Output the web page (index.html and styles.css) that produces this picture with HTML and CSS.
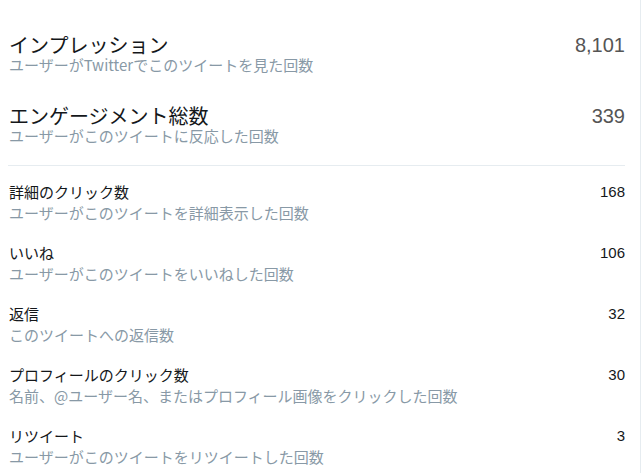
FILE: index.html
```html
<!DOCTYPE html>
<html lang="ja">
<head>
    <meta charset="UTF-8">
    <meta name="viewport" content="width=device-width, initial-scale=1.0">
    <title>ツイートアクティビティ</title>
    <link rel="stylesheet" href="styles.css">
</head>
<body>
    <div class="panel">
        <div class="metric metric-main">
            <div class="metric-text">
                <div class="metric-title">インプレッション</div>
                <div class="metric-desc">ユーザーがTwitterでこのツイートを見た回数</div>
            </div>
            <div class="metric-value">8,101</div>
        </div>
        <div class="metric metric-main">
            <div class="metric-text">
                <div class="metric-title">エンゲージメント総数</div>
                <div class="metric-desc">ユーザーがこのツイートに反応した回数</div>
            </div>
            <div class="metric-value">339</div>
        </div>

        <hr class="divider">

        <div class="metric">
            <div class="metric-text">
                <div class="metric-title">詳細のクリック数</div>
                <div class="metric-desc">ユーザーがこのツイートを詳細表示した回数</div>
            </div>
            <div class="metric-value">168</div>
        </div>
        <div class="metric">
            <div class="metric-text">
                <div class="metric-title">いいね</div>
                <div class="metric-desc">ユーザーがこのツイートをいいねした回数</div>
            </div>
            <div class="metric-value">106</div>
        </div>
        <div class="metric">
            <div class="metric-text">
                <div class="metric-title">返信</div>
                <div class="metric-desc">このツイートへの返信数</div>
            </div>
            <div class="metric-value">32</div>
        </div>
        <div class="metric">
            <div class="metric-text">
                <div class="metric-title">プロフィールのクリック数</div>
                <div class="metric-desc">名前、@ユーザー名、またはプロフィール画像をクリックした回数</div>
            </div>
            <div class="metric-value">30</div>
        </div>
        <div class="metric">
            <div class="metric-text">
                <div class="metric-title">リツイート</div>
                <div class="metric-desc">ユーザーがこのツイートをリツイートした回数</div>
            </div>
            <div class="metric-value">3</div>
        </div>
    </div>
</body>
</html>
```

FILE: styles.css
```css
body {
    margin: 0;
    font-family: "Noto Sans CJK JP", "Liberation Sans", sans-serif;
    color: #14171a;
    background: #fff;
}
.panel {
    width: 641px;
    height: 473px;
    overflow: hidden;
    padding: 34px 15px 0 9px;
    border-right: 1px solid #e6ecf0;
    box-sizing: border-box;
}
.metric {
    display: flex;
    justify-content: space-between;
    align-items: flex-start;
    margin-bottom: 19px;
}
.metric-title {
    font-size: 15px;
    line-height: 20px;
}
.metric-desc {
    font-size: 15px;
    line-height: 22px;
    color: #8899a6;
}
.metric-value {
    font-family: "Liberation Sans", Arial, sans-serif;
    font-size: 15px;
    line-height: 20px;
}
.metric-main {
    margin-bottom: 31px;
}
.metric-main .metric-title {
    font-size: 20px;
    line-height: 22px;
}
.metric-main .metric-desc {
    line-height: 18px;
}
.metric-main .metric-value {
    font-size: 20px;
    line-height: 22px;
    color: #555;
}
.metric-main + .divider {
    margin-top: -11px;
}
.divider {
    border: 0;
    border-top: 1px solid #e6ecf0;
    margin: 0 0 16px -1px;
}
```
